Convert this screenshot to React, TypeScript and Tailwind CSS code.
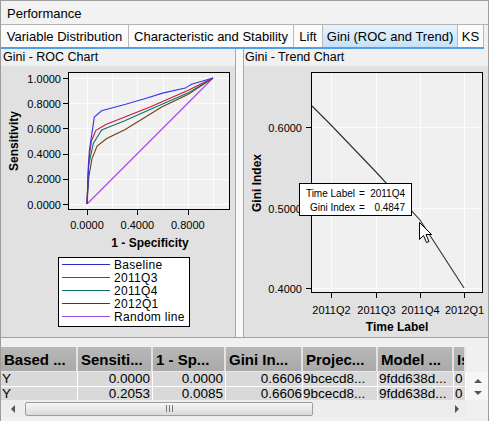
import React from "react";

const FONT = "Liberation Sans, Arial, sans-serif";
const X = (v: number) => 87 + 126 * v;
const Y = (v: number) => 204 - 126 * v;
const pts = (a: number[][]) => a.map(([x, y]) => `${X(x).toFixed(1)},${Y(y).toFixed(1)}`).join(" ");

const curves = [
  { name: "Random line", color: "#a04ae0", data: [[0, 0], [1, 1]] },
  { name: "2012Q1", color: "#6e3e16", data: [[0, 0], [0.015, 0.22], [0.04, 0.36], [0.08, 0.46], [0.156, 0.52], [0.3, 0.59], [0.593, 0.77], [0.8, 0.87], [1, 1]] },
  { name: "2011Q4", color: "#0a7565", data: [[0, 0], [0.012, 0.3], [0.05, 0.48], [0.116, 0.587], [0.18, 0.613], [0.3, 0.66], [0.5, 0.75], [0.8, 0.88], [1, 1]] },
  { name: "2011Q3", color: "#c8183c", data: [[0, 0], [0.012, 0.33], [0.035, 0.5], [0.071, 0.585], [0.15, 0.63], [0.3, 0.69], [0.5, 0.77], [0.8, 0.9], [1, 1]] },
  { name: "Baseline", color: "#3535ea", data: [[0, 0], [0.018, 0.42], [0.058, 0.69], [0.116, 0.74], [0.3, 0.79], [0.47, 0.84], [0.6, 0.88], [0.78, 0.92], [0.83, 0.95], [1, 1]] },
];

const legend = [
  { name: "Baseline", color: "#2a2ad0" },
  { name: "2011Q3", color: "#c8183c" },
  { name: "2011Q4", color: "#0a6e60" },
  { name: "2012Q1", color: "#623410" },
  { name: "Random line", color: "#9a4ad8" },
];

function RocChart() {
  const g = [0, 0.2, 0.4, 0.6, 0.8, 1];
  return (
    <svg width={234} height={190} viewBox="1 66 234 190" className="block shrink-0" fontFamily={FONT}>
      <rect x={68.5} y={72.5} width={161} height={137} fill="#f0f0f0" stroke="none" />
      {g.map((v) => (
        <line key={"v" + v} x1={Math.round(X(v)) + 0.5} x2={Math.round(X(v)) + 0.5} y1={73} y2={209} stroke="#fcfcfc" shapeRendering="crispEdges" />
      ))}
      {g.map((v) => (
        <line key={"h" + v} y1={Math.round(Y(v)) + 0.5} y2={Math.round(Y(v)) + 0.5} x1={69} x2={229} stroke="#fcfcfc" shapeRendering="crispEdges" />
      ))}
      <rect x={68.5} y={72.5} width={161} height={137} fill="none" stroke="#000" shapeRendering="crispEdges" />
      {g.map((v) => (
        <g key={"yt" + v}>
          <line x1={63} x2={68} y1={Math.round(Y(v)) + 0.5} y2={Math.round(Y(v)) + 0.5} stroke="#000" shapeRendering="crispEdges" />
          <text x={61} y={Y(v) + 0.5} fontSize={11} textAnchor="end" dominantBaseline="central" fill="#000">
            {v.toFixed(4)}
          </text>
        </g>
      ))}
      {[0, 0.4, 0.8].map((v) => (
        <g key={"xt" + v}>
          <line x1={Math.round(X(v)) + 0.5} x2={Math.round(X(v)) + 0.5} y1={210} y2={215} stroke="#000" shapeRendering="crispEdges" />
          <text x={X(v)} y={225} fontSize={11} textAnchor="middle" dominantBaseline="central" fill="#000">
            {v.toFixed(4)}
          </text>
        </g>
      ))}
      {curves.map((c) => (
        <polyline key={c.name} points={pts(c.data)} fill="none" stroke={c.color} strokeWidth={1.1} />
      ))}
      <text x={150} y={243} fontSize={12} fontWeight="bold" textAnchor="middle" dominantBaseline="central" fill="#000">
        1 - Specificity
      </text>
      <text x={14} y={141} fontSize={12} fontWeight="bold" textAnchor="middle" dominantBaseline="central" fill="#000" transform="rotate(-90 14 141)">
        Sensitivity
      </text>
    </svg>
  );
}

function TrendChart() {
  const xs = [
    { x: 331, l: "2011Q2" },
    { x: 376, l: "2011Q3" },
    { x: 420, l: "2011Q4" },
    { x: 464, l: "2012Q1" },
  ];
  const ys = [
    { y: 127, l: "0.6000" },
    { y: 208, l: "0.5000" },
    { y: 288, l: "0.4000" },
  ];
  return (
    <svg width={244} height={271} viewBox="244 66 244 271" className="block" fontFamily={FONT}>
      <rect x={311.5} y={72.5} width={171} height={220} fill="#f0f0f0" />
      {xs.map((t) => (
        <line key={t.l} x1={t.x + 0.5} x2={t.x + 0.5} y1={73} y2={292} stroke="#fcfcfc" shapeRendering="crispEdges" />
      ))}
      {ys.map((t) => (
        <line key={t.l} y1={t.y + 0.5} y2={t.y + 0.5} x1={312} x2={482} stroke="#fcfcfc" shapeRendering="crispEdges" />
      ))}
      <rect x={311.5} y={72.5} width={171} height={220} fill="none" stroke="#000" shapeRendering="crispEdges" />
      {ys.map((t) => (
        <g key={"yt" + t.l}>
          <line x1={306} x2={311} y1={t.y + 0.5} y2={t.y + 0.5} stroke="#000" shapeRendering="crispEdges" />
          <text x={302} y={t.y + 0.5} fontSize={11} textAnchor="end" dominantBaseline="central" fill="#000">
            {t.l}
          </text>
        </g>
      ))}
      {xs.map((t) => (
        <g key={"xt" + t.l}>
          <line x1={t.x + 0.5} x2={t.x + 0.5} y1={293} y2={298} stroke="#000" shapeRendering="crispEdges" />
          <text x={t.x + 0.5} y={310} fontSize={11} textAnchor="middle" dominantBaseline="central" fill="#000">
            {t.l}
          </text>
        </g>
      ))}
      <polyline points="312,106 331,125 376,172 420,220 464,288" fill="none" stroke="#2e2e2e" strokeWidth={1.1} />
      <text x={397} y={327} fontSize={12} fontWeight="bold" textAnchor="middle" dominantBaseline="central" fill="#000">
        Time Label
      </text>
      <text x={257} y={183} fontSize={12} fontWeight="bold" textAnchor="middle" dominantBaseline="central" fill="#000" transform="rotate(-90 257 183)">
        Gini Index
      </text>
      <path d="M419.5 222.5 L419.5 239.5 L423.5 235.5 L426.5 242.5 L429 241.5 L426 234.5 L431.5 234.5 Z" fill="#fff" stroke="#000" strokeWidth={1} strokeLinejoin="miter" />
    </svg>
  );
}

function Tri({ dir }: { dir: "l" | "r" | "u" | "d" }) {
  const d = {
    l: "M4 0 L4 8 L0 4 Z",
    r: "M0 0 L0 8 L4 4 Z",
    u: "M0 4 L8 4 L4 0 Z",
    d: "M0 0 L8 0 L4 4 Z",
  }[dir];
  const w = dir === "l" || dir === "r" ? 4 : 8;
  const h = dir === "l" || dir === "r" ? 8 : 4;
  return (
    <svg width={w} height={h} viewBox={`0 0 ${w} ${h}`} className="block">
      <path d={d} fill="#555" />
    </svg>
  );
}

const cols = [
  { w: "w-[77px]", h: "Based ...", r: ["Y", "Y"], a: "l" },
  { w: "w-[75px]", h: "Sensiti...", r: ["0.0000", "0.2053"], a: "r" },
  { w: "w-[73px]", h: "1 - Sp...", r: ["0.0000", "0.0085"], a: "r" },
  { w: "w-[77px]", h: "Gini In...", r: ["0.6606", "0.6606"], a: "r0" },
  { w: "w-[75px]", h: "Projec...", r: ["9bcecd8...", "9bcecd8..."], a: "l0" },
  { w: "w-[76px]", h: "Model ...", r: ["9fdd638d...", "9fdd638d..."], a: "l" },
  { w: "w-[12px]", h: "Is", r: ["0", "0"], a: "l" },
];

export default function App() {
  return (
    <div className="w-[489px] h-[421px] overflow-hidden bg-[#f0f0f0] font-['Liberation_Sans',Arial,sans-serif] text-black">
      <div className="w-[489px] h-[421px] border border-b-0 border-[#9c9c9c] flex flex-col">
        {/* title bar */}
        <div className="h-[24px] shrink-0 border-b border-[#b4b4b4] bg-[#f2f2f2] flex items-center pl-[6px] pt-[1px] text-[13px] leading-none">
          Performance
        </div>
        {/* tabs */}
        <div className="h-[24px] shrink-0 flex flex-col">
          <div className="h-[22px] flex text-[13px] leading-none">
            <div className="w-[128px] h-full border-r border-[#b9b9b9] bg-[#fbfbfb] flex items-center justify-center">Variable Distribution</div>
            <div className="w-[165px] h-full border-r border-[#b9b9b9] bg-[#fbfbfb] flex items-center justify-center">Characteristic and Stability</div>
            <div className="w-[29px] h-full border-r border-[#b9b9b9] bg-[#fbfbfb] flex items-center justify-center">Lift</div>
            <div className="w-[135px] h-full border-r border-[#b9b9b9] bg-linear-to-b from-[#e9f4fd] to-[#c5e1f7] flex items-center justify-center">Gini (ROC and Trend)</div>
            <div className="w-[26px] h-full border-r border-[#b9b9b9] bg-[#fbfbfb] flex items-center justify-center">KS</div>
          </div>
          <div className="h-[2px] w-[483px] bg-[#4fa0e6]" />
        </div>
        {/* charts */}
        <div className="h-[288px] shrink-0 flex">
          <div className="w-[235px] shrink-0 border-r border-[#a8a8a8] flex flex-col">
            <div className="h-[17px] shrink-0 bg-[#f0f0f0] flex items-center pl-[2px] text-[12.5px] leading-none">Gini - ROC Chart</div>
            <div className="flex-1 bg-[#e1e1e1] flex flex-col overflow-hidden">
              <RocChart />
              <div className="mt-[1px] ml-[57px] w-[132px] h-[70px] border border-black bg-white pl-[3px] flex flex-col">
                {legend.map((l) => (
                  <div key={l.name} className="h-[13px] flex items-center gap-[4px] text-[12px] leading-none tracking-[0.3px]">
                    <div className="w-[48px] h-[1.5px]" style={{ backgroundColor: l.color }} />
                    <span>{l.name}</span>
                  </div>
                ))}
              </div>
            </div>
          </div>
          <div className="w-[7px] shrink-0 bg-[#f8f8f8]" />
          <div className="flex-1 border-l border-[#a8a8a8] flex flex-col">
            <div className="h-[17px] shrink-0 bg-[#f0f0f0] flex items-center pl-[1px] text-[12.5px] leading-none">Gini - Trend Chart</div>
            <div className="flex-1 bg-[#e1e1e1] relative overflow-hidden">
              <TrendChart />
              <div className="absolute left-[55px] top-[117px] w-[113px] h-[33px] border border-black bg-white pl-[2px] pt-[3px] text-[10px] leading-[13px] grid grid-cols-[53px_14px_36px]">
                <span className="text-right whitespace-nowrap">Time Label</span>
                <span className="text-center">=</span>
                <span className="text-right">2011Q4</span>
                <span className="text-right whitespace-nowrap">Gini Index</span>
                <span className="text-center">=</span>
                <span className="text-right">0.4847</span>
              </div>
            </div>
          </div>
        </div>
        {/* strip */}
        <div className="h-[10px] shrink-0 border-t border-[#a0a0a0] bg-[#f0f0f0]" />
        {/* table header */}
        <div className="h-[25px] shrink-0 flex">
          <div className="w-[465px] shrink-0 flex overflow-hidden border-b border-[#e8e8e8] bg-linear-to-b from-[#b8b8b8] to-[#a9a9a9]">
            {cols.map((c) => (
              <div key={c.h} className={`${c.w} shrink-0 h-full border-r-2 border-[#e2e2e2] flex items-center pl-[3px] text-[15px] font-bold leading-none whitespace-nowrap overflow-hidden`}>
                {c.h}
              </div>
            ))}
          </div>
          <div className="flex-1 bg-[#f0f0f0]" />
        </div>
        {/* rows */}
        <div className="h-[28px] shrink-0 flex">
          <div className="w-[465px] shrink-0 flex flex-col overflow-hidden bg-white">
            {[0, 1].map((ri) => (
              <div key={ri} className="h-[15px] shrink-0 flex">
                {cols.map((c) => (
                  <div
                    key={c.h}
                    className={`${c.w} shrink-0 h-full border-r border-b border-white bg-[#d9d9d9] flex items-center text-[13.5px] leading-none whitespace-nowrap overflow-hidden ${
                      c.a === "r" ? "justify-end pr-[2px]" : c.a === "r0" ? "justify-end pr-0" : c.a === "l0" ? "justify-start pl-0" : "justify-start pl-[1px]"
                    }`}
                  >
                    {c.r[ri]}
                  </div>
                ))}
              </div>
            ))}
          </div>
          <div className="flex-1 bg-[#f6f6f6] flex flex-col items-center pt-[7px] gap-[8px] pl-[1px]">
            <Tri dir="u" />
            <Tri dir="d" />
          </div>
        </div>
        {/* horizontal scrollbar */}
        <div className="h-[17px] shrink-0 flex">
          <div className="w-[465px] shrink-0 flex items-center bg-[#ededed]">
            <div className="w-[22px] h-full flex items-center justify-center pl-[2px]">
              <Tri dir="l" />
            </div>
            <div className="ml-[2px] w-[288px] h-[14px] rounded-[2px] border border-[#9e9e9e] bg-linear-to-b from-[#f7f7f7] to-[#d9d9d9] flex items-center justify-center gap-[2px]">
              <div className="w-[1px] h-[7px] bg-[#777]" />
              <div className="w-[1px] h-[7px] bg-[#777]" />
              <div className="w-[1px] h-[7px] bg-[#777]" />
            </div>
            <div className="flex-1" />
            <div className="w-[18px] h-full flex items-center justify-center">
              <Tri dir="r" />
            </div>
          </div>
          <div className="flex-1 bg-[#f0f0f0]" />
        </div>
        <div className="flex-1 bg-[#f0f0f0]" />
      </div>
    </div>
  );
}
